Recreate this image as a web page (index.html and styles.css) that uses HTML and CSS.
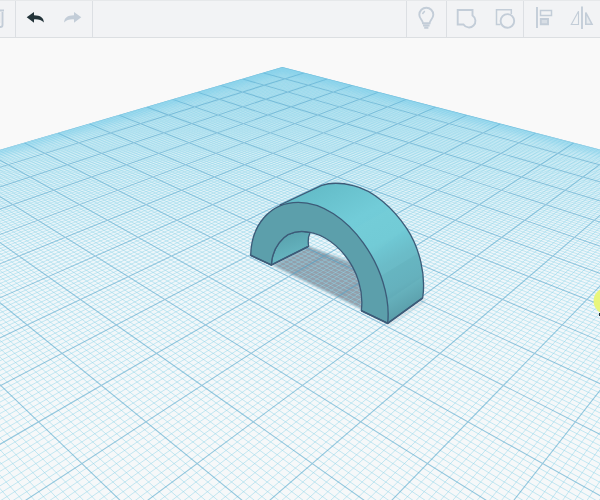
FILE: index.html
```html
<!DOCTYPE html>
<html lang="en">
<head>
<meta charset="utf-8">
<meta name="viewport" content="width=device-width, initial-scale=1">
<title>3D editor</title>
<link rel="stylesheet" href="styles.css">
</head>
<body>
<header class="toolbar">
  <div class="group group-edge">
    <button class="tool" type="button" aria-label="Delete">
      <svg class="icon" viewBox="0 0 38 36"><path d="M15 9.500H27M17 11V24.500Q17 26 18.500 26H23.500Q25.500 26 25.500 24V11M22.200 12V22"/></svg>
    </button>
  </div>
  <div class="group">
    <button class="tool active" type="button" aria-label="Undo">
      <svg class="icon" viewBox="0 0 38 36"><path class="solid" d="M10.700 16.200L18 11V14.200C24.500 14.200 28 17 27.800 21.500C25.500 19 22.500 18.200 18 18.400V21.800Z"/></svg>
    </button>
    <button class="tool" type="button" aria-label="Redo">
      <svg class="icon" viewBox="0 0 38 36"><path class="solid" d="M27.300 16.200L20 11V14.200C13.500 14.200 10 17 10.200 21.500C12.500 19 15.500 18.200 20 18.400V21.800Z"/></svg>
    </button>
  </div>
  <div class="group group-end">
    <button class="tool" type="button" aria-label="Show all">
      <svg class="icon" viewBox="0 0 38 36"><path d="M16 22.200C16 19.300 12.300 17.800 12.300 13.700A7 7 0 0 1 26.300 13.700C26.300 17.800 22.600 19.300 22.600 22.200ZM16 24.500H22.600M17.200 26.700H21.400"/><path class="fine" d="M15.600 13.200Q15.900 11 18 10.200"/></svg>
    </button>
  </div>
  <div class="group">
    <button class="tool" type="button" aria-label="Group">
      <svg class="icon" viewBox="0 0 38 36"><path d="M10.700 9H25.500V14.500A6.500 6.500 0 1 1 16.500 23.500H10.700Z"/></svg>
    </button>
    <button class="tool" type="button" aria-label="Ungroup">
      <svg class="icon" viewBox="0 0 38 36"><path class="fine" d="M15.500 23.500H11.500V8.800H26.300V13"/><circle cx="22.400" cy="19.900" r="6.800"/></svg>
    </button>
  </div>
  <div class="group">
    <button class="tool" type="button" aria-label="Align">
      <svg class="icon" viewBox="0 0 38 36"><path d="M13 6V27"/><path class="fine" d="M16.500 9.500H27.500V14.500H16.500Z"/><path class="tint" d="M16.800 18H24V23.200H16.800Z"/></svg>
    </button>
    <button class="tool" type="button" aria-label="Mirror">
      <svg class="icon" viewBox="0 0 38 36"><path d="M20 5.500V28"/><path class="thin" d="M16.500 10.300V23.500H9.300Z"/><path class="light" d="M23.800 11.500V23.200H30Z"/></svg>
    </button>
  </div>
</header>
<main class="workspace">
  <svg class="scene" viewBox="0 38 600 462" preserveAspectRatio="xMidYMin slice" role="img" aria-label="Arch on the workplane">
    <defs>
      <linearGradient id="plane" gradientUnits="userSpaceOnUse" x1="0" y1="67" x2="0" y2="430">
        <stop offset="0" stop-color="#b8e4f4"/>
        <stop offset=".2" stop-color="#d6eff7"/>
        <stop offset=".5" stop-color="#eef6fa"/>
        <stop offset="1" stop-color="#f6f8f9"/>
      </linearGradient>
      <linearGradient id="skin" gradientUnits="userSpaceOnUse" x1="270" y1="20" x2="500" y2="440">
        <stop offset="0" stop-color="#62bac6"/>
        <stop offset=".15" stop-color="#69c2ce"/>
        <stop offset=".34" stop-color="#72ccd8"/>
        <stop offset=".54" stop-color="#70cad6"/>
        <stop offset=".68" stop-color="#6bbcc8"/>
        <stop offset=".84" stop-color="#69b6c1"/>
        <stop offset="1" stop-color="#5b9fab"/>
      </linearGradient>
      <linearGradient id="inside" x1="0" y1="0" x2=".4" y2="1">
        <stop offset="0" stop-color="#559da9"/>
        <stop offset="1" stop-color="#69b9c4"/>
      </linearGradient>
      <filter id="haze" x="-10%" y="-10%" width="120%" height="120%"><feGaussianBlur stdDeviation="4"/></filter>
      <filter id="soft"><feGaussianBlur stdDeviation="3"/></filter>
      <clipPath id="sheet"><path id="sheet-shape"/></clipPath>
    </defs>
    <g clip-path="url(#sheet)">
      <path fill="url(#plane)" d="M0 38H600V500H0Z"/>
      <g transform="translate(230 170) scale(.33333)" filter="url(#soft)">
        <path class="shadow" d="M128 286L233 228L370 280L396 350V418Z"/>
        <path class="shadow-soft" d="M394 423L474 462L582 386L588 394L476 468Z"/>
      </g>
      <path id="minor" class="minor"/>
      <path id="major" class="major"/>
      <path id="rim" class="rim" filter="url(#haze)"/>
    </g>
    <g transform="translate(230 170) scale(.33333)">
      <path fill="url(#inside)" class="edge" d="M124 285C126 240 155 184 215 184L240 188Q232 205 236 229Z"/>
      <path fill="url(#skin)" class="edge" d="M150 105L275 46C300 38 335 38 370 47C430 61 490 115 530 175C570 235 588 318 578 384L473 460L300 130Z"/>
      <path class="facet" d="M365 180L480 115L530 175L423 257Z"/>
      <path class="facet-dark" d="M453 318L565 249L578 320L473 391Z"/>
      <path class="face edge" d="M62 256C64 165 120 97 205 97C350 97 490 300 473 460L394 422C409 300 310 184 215 184C155 184 126 240 124 285Z"/>
      <path class="edge base" d="M62 256L124 285L233 230M394 422L473 460L578 384"/>
    </g>
    <circle cx="607" cy="301" r="13.400" fill="#e9f67c"/>
    <path d="M599 313H602V316H599Z" fill="#26323a"/>
  </svg>
</main>
<script src="grid.js"></script>
</body>
</html>
```

FILE: styles.css
```css
* {
  box-sizing: border-box;
}

body {
  margin: 0;
  height: 100vh;
  display: flex;
  flex-direction: column;
  background: #f9f9f9;
  font-family: "Open Sans", sans-serif;
  overflow: hidden;
}

.toolbar {
  display: flex;
  flex: none;
  height: 38px;
  background: #f2f3f5;
  border-top: 1px solid #e6e8ea;
  border-bottom: 1px solid #dcdfe2;
}

.group {
  display: flex;
  border-left: 1px solid #dcdfe3;
}

.group-edge {
  width: 15px;
  justify-content: flex-end;
  overflow: hidden;
  border-left: 0;
}

.group-edge + .group {
  border-right: 1px solid #dcdfe3;
}

.group-end {
  margin-left: auto;
}

.tool {
  display: flex;
  flex: none;
  width: 38px;
  padding: 0;
  border: 0;
  background: none;
  color: #c3cdd8;
  cursor: pointer;
}

.group-end .tool {
  width: 39px;
}

.tool.active {
  color: #24343a;
}

.icon {
  width: 38px;
  height: 36px;
  fill: none;
  stroke: currentColor;
  stroke-width: 1.9;
}

.icon .solid {
  fill: currentColor;
  stroke: none;
}

.icon .fine {
  stroke-width: 1.5;
}

.icon .thin {
  stroke-width: 1.1;
}

.icon .tint {
  fill: #d8dee5;
}

.icon .light {
  fill: #e6eaee;
  stroke-width: 1.6;
}

.workspace {
  flex: 1;
  min-height: 0;
}

.scene {
  display: block;
  width: 100%;
  height: 100%;
}

.minor {
  fill: none;
  stroke: #8fd6ea;
  stroke-opacity: .5;
  stroke-width: 1;
}

.major {
  fill: none;
  stroke: #4ea4c9;
  stroke-opacity: .58;
  stroke-width: 1.1;
}

.rim {
  fill: none;
  stroke: #66c4e8;
  stroke-opacity: .6;
  stroke-width: 7;
}

.shadow {
  fill: #61707f;
  fill-opacity: .65;
}

.shadow-soft {
  fill: #61707f;
  fill-opacity: .2;
}

.edge {
  stroke: #3c5b78;
  stroke-width: 4;
  stroke-linejoin: round;
}

.face {
  fill: #5c9fab;
}

.base {
  fill: none;
  stroke-width: 5;
}

.facet {
  fill: #ffffff;
  fill-opacity: .02;
}

.facet-dark {
  fill: #2a6472;
  fill-opacity: .05;
}
```

FILE: grid.js
```js
// Perspective of the workplane: i and j count centimetres along its two edges.
const HORIZON = -150.7;
const VANISH_X = 234.3;
const CELLS = 16;

function project(i, j) {
  const depth = 1 / (0.0045942 - 0.00011865 * (i + j));
  const x = VANISH_X + depth * 0.1875 * (1.177 + (i - j) / 2);
  return x.toFixed(2) + " " + (depth + HORIZON).toFixed(2);
}

let minor = "";
let major = "";
for (let k = 0; k <= CELLS * 10; k++) {
  const t = k / 10;
  const lines = "M" + project(t, 0) + "L" + project(t, CELLS) +
    "M" + project(0, t) + "L" + project(CELLS, t);
  if (k % 10 === 0) major += lines;
  else minor += lines;
}

document.getElementById("minor").setAttribute("d", minor);
document.getElementById("major").setAttribute("d", major);
document.getElementById("rim").setAttribute("d",
  "M" + project(0, CELLS) + "L" + project(0, 0) + "L" + project(CELLS, 0));
document.getElementById("sheet-shape").setAttribute("d",
  "M" + project(0, CELLS) + "L" + project(0, 0) + "L" + project(CELLS, 0) +
  "L" + project(CELLS, CELLS) + "Z");
```
